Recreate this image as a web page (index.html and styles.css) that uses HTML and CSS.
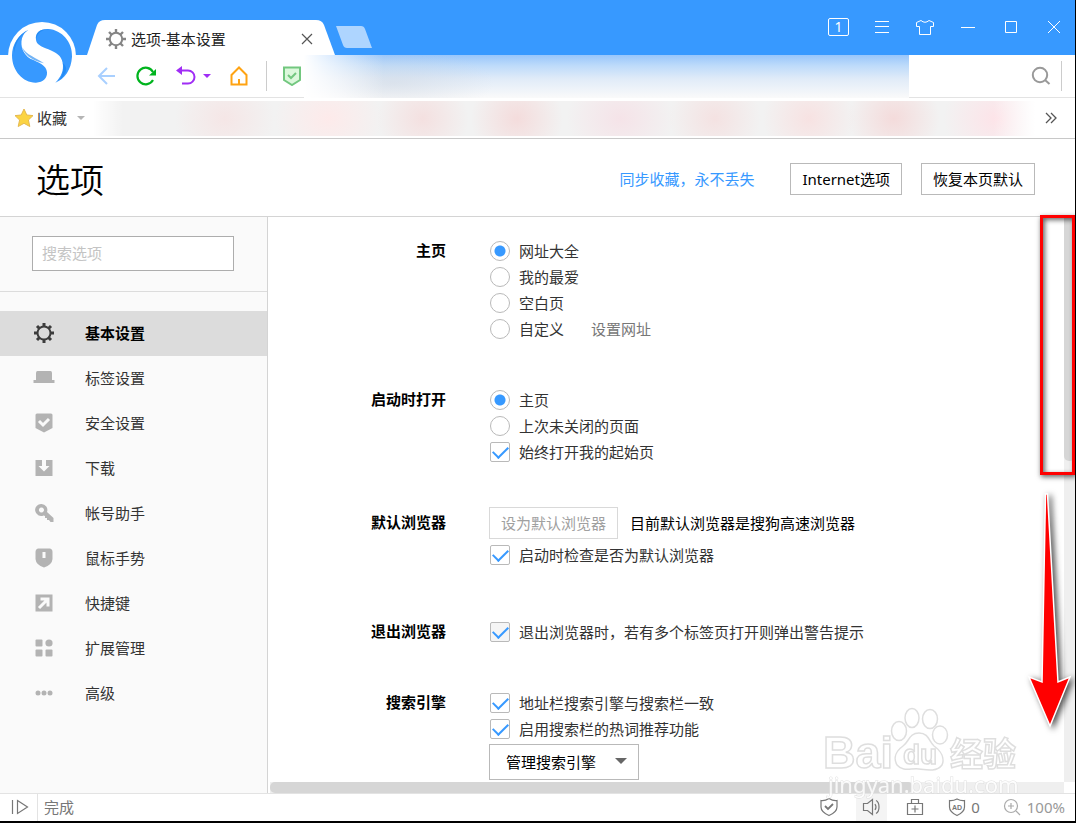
FILE: index.html
```html
<!DOCTYPE html>
<html lang="zh-CN">
<head>
<meta charset="utf-8">
<title>选项-基本设置</title>
<link rel="stylesheet" href="styles.css">
</head>
<body>
<div class="browser">
  <header class="titlebar">
    <svg class="logo" viewBox="0 0 240 261" aria-hidden="true">
      <circle cx="126" cy="168" r="102" fill="#fff"/>
      <path d="M86 89C54 104 36 134 36 166C36 214 70 249 108 248C130 247 142 235 141 217C140 196 116 187 91 176C70 164 60 139 66 115C70 102 77 94 86 89Z" fill="#3799ff"/>
      <path d="M108 119C106 97 121 86 145 87C186 90 218 126 216 170C214 208 194 237 166 248C184 230 192 211 188 189C184 166 168 158 145 148C122 139 109 132 108 119Z" fill="#3799ff"/>
      <path d="M86 89C54 104 40 130 42 158C50 120 62 104 86 89ZM66 140C76 164 112 174 132 190C110 184 76 174 66 140ZM108 119C104 98 121 86 145 87C126 90 112 98 108 119ZM188 189C194 206 188 230 174 244C206 218 202 200 188 189Z" fill="#1682ee" opacity=".6"/>
    </svg>
    <div class="tab">
      <svg class="tab-shape" viewBox="0 0 248 35" preserveAspectRatio="none" aria-hidden="true"><path d="M0 35L10 5Q12 0 18 0H229Q235 0 237 5L248 35Z" fill="#fff"/></svg>
      <svg class="icon20" viewBox="0 0 20 20" fill="none" stroke="#858585" aria-hidden="true"><circle cx="10" cy="10" r="6.2" stroke-width="2"/><path d="M10 0V4M10 16V20M0 10H4M16 10H20M3 3L5.500 5.500M14.500 14.500L17 17M17 3L14.500 5.500M5.500 14.500L3 17" stroke-width="2.400"/></svg>
      <span class="tab-title">选项-基本设置</span>
      <button class="plain tab-close" aria-label="关闭标签"><svg class="icon12" viewBox="0 0 12 12" stroke="#555" stroke-width="1.200"><path d="M1 1L11 11M11 1L1 11"/></svg></button>
    </div>
    <button class="plain new-tab" aria-label="新建标签"><svg viewBox="0 0 37 22"><path d="M0 0H25Q28 0 29 3L36 22H11Q8 22 7 19Z" fill="#aed5ff"/></svg></button>
    <div class="window-buttons">
      <button class="plain" aria-label="窗口数"><span class="count">1</span></button>
      <button class="plain" aria-label="菜单"><svg viewBox="0 0 20 20"><path d="M3 4.500H17M3 9.500H17M3 15.500H17"/></svg></button>
      <button class="plain" aria-label="皮肤"><svg viewBox="0 0 20 20"><path d="M6 3.500Q10 7 14 3.500L18.500 5.500V9.500H15.500V17.500H4.500V9.500H1.500V5.500Z"/></svg></button>
      <button class="plain" aria-label="最小化"><svg viewBox="0 0 20 20"><path d="M3 10.500H17"/></svg></button>
      <button class="plain" aria-label="最大化"><svg viewBox="0 0 20 20"><path d="M4.500 4.500H15.500V15.500H4.500Z"/></svg></button>
      <button class="plain" aria-label="关闭"><svg viewBox="0 0 20 20"><path d="M4 4L16 16M16 4L4 16"/></svg></button>
    </div>
  </header>

  <div class="toolbar">
    <button class="plain" aria-label="后退"><svg class="icon20" viewBox="0 0 20 20" fill="none" stroke="#a9d0ff" stroke-width="2"><path d="M19 10H3M11 2L3 10L11 18"/></svg></button>
    <button class="plain" aria-label="刷新"><svg class="icon20" viewBox="0 0 20 20" fill="none" stroke="#00b41e" stroke-width="2.200"><path d="M17 14A8.300 8.300 0 1 1 17 6"/><path d="M20 3V9.500H13Z" fill="#00b41e" stroke="none"/></svg></button>
    <button class="plain undo" aria-label="恢复"><svg class="icon20" viewBox="0 0 20 20" fill="none" stroke="#a02df5" stroke-width="2"><path d="M3 4.500H12A6.400 6.400 0 0 1 12 17.500H6"/><path d="M0 4.500L6 0V9Z" fill="#a02df5" stroke="none"/></svg><svg class="caret" viewBox="0 0 8 5"><path d="M0 0H8L4 4Z" fill="#a02df5"/></svg></button>
    <button class="plain home" aria-label="主页"><svg class="icon20" viewBox="0 0 20 20" fill="none" stroke="#ffa312" stroke-width="2"><path d="M2.500 18.500V9L10 1.500L17.500 9V18.500ZM10 18V13"/></svg></button>
    <span class="divider"></span>
    <svg class="icon20 shield" viewBox="0 0 20 20" fill="#dcf8dc" stroke="#72c77f" stroke-width="2" role="img" aria-label="安全"><path d="M2 1.500H18V14L10 19L2 14Z"/><path d="M6 9L9 12L14 7" fill="none"/></svg>
    <div class="address"></div>
    <div class="quick-search"><button class="plain" aria-label="搜索"><svg class="icon20" viewBox="0 0 20 20" fill="none" stroke="#999" stroke-width="2"><circle cx="9" cy="9" r="7.200"/><path d="M14 14L18.500 18"/></svg></button><span class="divider"></span></div>
  </div>

  <div class="bookmarks">
    <button class="plain fav"><svg class="icon20" viewBox="0 0 20 20" aria-hidden="true"><path d="M10 1L12.800 7L19 7.600L14.400 12L15.800 18.500L10 15.300L4.200 18.500L5.600 12L1 7.600L7.200 7Z" fill="#fbd443" stroke="#e5b950"/></svg><span>收藏</span><svg class="caret" viewBox="0 0 8 5" aria-hidden="true"><path d="M0 0H8L4 4Z" fill="#b5b5b5"/></svg></button>
    <div class="bookmark-list"></div>
    <button class="plain more" aria-label="更多"><svg class="icon12" viewBox="0 0 12 12" fill="none" stroke="#555" stroke-width="1.300"><path d="M1 1L6 6L1 11M6 1L11 6L6 11"/></svg></button>
  </div>

  <div class="page-head">
    <h1>选项</h1>
    <a class="sync" href="#">同步收藏，永不丢失</a>
    <button class="box">Internet选项</button>
    <button class="box">恢复本页默认</button>
  </div>

  <div class="body">
    <aside class="sidebar">
      <div class="search"><input type="text" placeholder="搜索选项" aria-label="搜索选项"></div>
      <nav class="nav">
        <a class="current" href="#"><svg viewBox="0 0 22 22" fill="none" stroke="#3c3c3c"><circle cx="11" cy="11" r="6.500" stroke-width="2"/><path d="M11 1V5M11 17V21M1 11H5M17 11H21M4 4L6.500 6.500M15.500 15.500L18 18M18 4L15.500 6.500M6.500 15.500L4 18" stroke-width="3"/></svg>基本设置</a>
        <a href="#"><svg viewBox="0 0 22 22"><path d="M4.500 4H17.500Q19 4 19 6V13H21.500V16H.5V13H3V6Q3 4 4.500 4Z"/></svg>标签设置</a>
        <a href="#"><svg viewBox="0 0 22 22"><path d="M4 1.500H18Q19.500 1.500 19.500 3V16L11 20.500L2.500 16V3Q2.500 1.500 4 1.500Z"/><path class="cut" d="M6 9L10 13L16 7"/></svg>安全设置</a>
        <a href="#"><svg viewBox="0 0 22 22"><path d="M2.500 3H9V9H5.500L11 14.500L16.500 9H13V3H19.500V19H2.500Z"/></svg>下载</a>
        <a href="#"><svg viewBox="0 0 22 22"><path fill-rule="evenodd" d="M8.500 2A6 6 0 1 0 10.500 13.500L12 14V16H14V18H16L17.500 20H20.500V16L14 10A6 6 0 0 0 8.500 2ZM8.500 5.500A2.500 2.500 0 1 1 8.400 5.500Z"/></svg>帐号助手</a>
        <a href="#"><svg viewBox="0 0 22 22"><path d="M5 1.500H17Q19.500 2 19.500 5V12Q19 18 11 20.500Q3 18 2.500 12V5Q2.500 2 5 1.500Z"/><path class="cut" d="M11 5V11"/></svg>鼠标手势</a>
        <a href="#"><svg viewBox="0 0 22 22"><path d="M2.500 2.500H19.500V19.500H2.500Z"/><path class="cut" d="M6 16L14 8M7.500 7H15V14.500"/></svg>快捷键</a>
        <a href="#"><svg viewBox="0 0 22 22"><rect x="2.500" y="2.500" width="7" height="7" rx="1"/><circle cx="16" cy="6" r="3.600"/><rect x="2.500" y="12.500" width="7" height="7" rx="1"/><rect x="12.500" y="12.500" width="7" height="7" rx="1"/></svg>扩展管理</a>
        <a href="#"><svg viewBox="0 0 22 22"><circle cx="5" cy="11" r="2.500"/><circle cx="11" cy="11" r="2.500"/><circle cx="17" cy="11" r="2.500"/></svg>高级</a>
      </nav>
    </aside>

    <div class="scroller">
      <main class="settings">
        <section class="group">
          <h2>主页</h2>
          <div class="fields">
            <label><input type="radio" name="home" checked>网址大全</label>
            <label><input type="radio" name="home">我的最爱</label>
            <label><input type="radio" name="home">空白页</label>
            <div class="line"><label><input type="radio" name="home">自定义</label><a class="set-url" href="#">设置网址</a></div>
          </div>
        </section>
        <section class="group">
          <h2>启动时打开</h2>
          <div class="fields">
            <label><input type="radio" name="start" checked>主页</label>
            <label><input type="radio" name="start">上次未关闭的页面</label>
            <label><input type="checkbox" checked>始终打开我的起始页</label>
          </div>
        </section>
        <section class="group default-browser">
          <h2>默认浏览器</h2>
          <div class="fields">
            <div class="line"><button class="box" disabled>设为默认浏览器</button><span class="note">目前默认浏览器是搜狗高速浏览器</span></div>
            <label><input type="checkbox" checked>启动时检查是否为默认浏览器</label>
          </div>
        </section>
        <section class="group">
          <h2>退出浏览器</h2>
          <div class="fields">
            <label><input class="shaded" type="checkbox" checked>退出浏览器时，若有多个标签页打开则弹出警告提示</label>
          </div>
        </section>
        <section class="group">
          <h2>搜索引擎</h2>
          <div class="fields">
            <label><input type="checkbox" checked>地址栏搜索引擎与搜索栏一致</label>
            <label><input type="checkbox" checked>启用搜索栏的热词推荐功能</label>
            <div class="picker"><select aria-label="管理搜索引擎"><option>管理搜索引擎</option></select></div>
          </div>
        </section>
      </main>
      <div class="vbar"><div class="vthumb"></div></div>
      <div class="hbar"><div class="hthumb"></div></div>
    </div>
  </div>

  <footer class="status">
    <button class="plain side-toggle" aria-label="侧边栏"><svg class="icon20" viewBox="0 0 20 20"><path d="M3.500 3V17M8.500 3.500L18.500 10L8.500 16.500Z"/></svg></button>
    <span class="state">完成</span>
    <button class="plain" aria-label="安全"><svg class="icon20" viewBox="0 0 20 20"><path d="M10 1.500Q14 4 18 3.500V10Q18 15 10 18.500Q2 15 2 10V3.500Q6 4 10 1.500Z"/><path d="M6 9L9 12L14 7" stroke-width="1.800"/></svg></button>
    <button class="plain lit" aria-label="声音"><svg class="icon20" viewBox="0 0 20 20"><path d="M1.500 6.500H5.500L10.500 2.500V17.500L5.500 13.500H1.500ZM13 7Q15 10 13 13M14 3.500Q17 5 17 10Q17 15 14 16.500"/></svg></button>
    <button class="plain" aria-label="工具箱"><svg class="icon20" viewBox="0 0 20 20"><path d="M2.500 6.500H17.500V17.500H2.500ZM6.500 6V2.500H13.500V6M10 8.500V15.500M6.500 12H13.500"/></svg></button>
    <button class="plain ads" aria-label="广告拦截 0"><svg class="icon20" viewBox="0 0 20 20"><path d="M10 2Q14 4 17.500 3.500V10Q17.500 15 10 18.500Q2.500 15 2.500 10V3.500Q6 4 10 2Z"/><text x="10" y="13" class="ad-text">AD</text></svg><span>0</span></button>
    <button class="plain zoom"><svg class="icon20" viewBox="0 0 20 20" aria-hidden="true"><circle cx="9" cy="9" r="6.500"/><path d="M14 14L18 18M9 6V12M6 9H12"/></svg><span>100%</span></button>
  </footer>

  <svg class="watermark" viewBox="0 0 210 100" aria-hidden="true">
    <g fill="#fff" stroke="#d9d9d9" stroke-width="1.500">
      <text x="3" y="64" class="wm-bai">Bai</text>
      <ellipse cx="79" cy="27" rx="7.500" ry="9.500"/>
      <ellipse cx="92" cy="14" rx="7" ry="9.500"/>
      <ellipse cx="110" cy="15" rx="7.500" ry="9.500"/>
      <ellipse cx="120" cy="31" rx="7.500" ry="9"/>
      <path d="M99 29C89 29 89 38 83 42C76 47 73 54 77 61C83 68 91 64 99 65C107 66 117 68 122 61C125 54 121 47 114 42C109 38 109 29 99 29Z"/>
      <text x="83" y="60" class="wm-du">du</text>
      <text x="130" y="62" class="wm-cn">经验</text>
      <text x="8" y="89" class="wm-url">jingyan.baidu.com</text>
    </g>
  </svg>
  <div class="mark-box"></div>
  <svg class="mark-arrow" viewBox="0 0 50 250" aria-hidden="true"><path d="M21.500 7H23.500L34 195L46 190L26 239L5 190L18 195Z" fill="#f00" stroke="#fff" stroke-width="1.500"/></svg>
</div>
</body>
</html>
```

FILE: styles.css
```css
* { box-sizing: border-box; }

body {
  margin: 0;
  font: 15px/20px "Noto Sans", "Noto Sans CJK SC", sans-serif;
  color: #333;
  background: #fff;
}

button, input, select { font: inherit; color: inherit; }
a { color: inherit; text-decoration: none; }
svg { display: block; flex: none; }

.browser {
  position: relative;
  display: flex;
  flex-direction: column;
  min-height: 100vh;
  overflow: hidden;
  border-right: 1px solid #000;
  border-bottom: 2px solid #000;
}

.plain {
  display: flex;
  align-items: center;
  justify-content: center;
  padding: 0;
  border: 0;
  background: none;
}

.icon20 { width: 20px; height: 20px; }
.icon12 { width: 12px; height: 12px; }
.caret { width: 8px; height: 5px; }
.divider { width: 1px; height: 30px; background: #ccc; }

/* title bar */
.titlebar {
  display: flex;
  align-items: flex-end;
  height: 55px;
  padding-left: 87px;
  background: #3799ff;
}

.logo { position: absolute; left: 0; top: 0; width: 80px; height: 87px; z-index: 1; }

.tab {
  position: relative;
  display: flex;
  align-items: center;
  width: 248px;
  height: 35px;
  padding: 2px 22px 0 19px;
  color: #222;
}

.tab > * { position: relative; }
.tab .tab-shape { position: absolute; inset: 0; width: 100%; height: 100%; }
.tab-title { flex: 1; margin-left: 5px; }
.new-tab { align-self: center; height: 22px; margin: 19px 0 0 1px; }
.new-tab svg { width: 37px; height: 22px; }

.window-buttons { display: flex; margin-left: auto; }
.window-buttons button { width: 43px; height: 55px; padding-bottom: 2px; }
.window-buttons svg { width: 20px; height: 20px; fill: none; stroke: #fff; }

.count {
  width: 21px;
  height: 18px;
  border: 1px solid #fff;
  border-radius: 2px;
  color: #fff;
  font-size: 14px;
  line-height: 16px;
}

/* toolbar */
.toolbar {
  display: flex;
  align-items: center;
  height: 43px;
  padding-left: 96px;
  border-bottom: 1px solid #e3e3e3;
}

.toolbar > button + button { margin-left: 20px; }
.undo { gap: 7px; }
.toolbar > .home { margin-left: 18px; }
.toolbar > .divider { margin-left: 17px; }
.shield { margin-left: 15px; }

.address {
  flex: 1;
  align-self: stretch;
  margin: 0 0 -1px 2px;
  background:
    linear-gradient(90deg, #fff, rgba(255, 255, 255, 0) 80px),
    radial-gradient(100px 34px at 90px 28px, rgba(205, 212, 222, .45), transparent),
    linear-gradient(#98c6fb, #bedbfa 25%, #e0ebf8 55%, #fafafa);
}

.quick-search {
  display: flex;
  align-items: center;
  justify-content: flex-end;
  width: 166px;
  gap: 10px;
  padding-right: 13px;
}

/* bookmarks */
.bookmarks {
  display: flex;
  align-items: center;
  height: 41px;
  padding: 0 18px 0 14px;
  border-bottom: 1px solid #c8c8c8;
}

.fav { gap: 3px; }
.fav .caret { margin-left: 7px; }

.bookmark-list {
  flex: 1;
  height: 35px;
  margin: 0 10px 0 8px;
  background:
    linear-gradient(90deg, #fff, transparent 30px, transparent 900px, #fff),
    radial-gradient(50px 44px at 14% 50%, #f5e6e6, transparent),
    radial-gradient(54px 44px at 25% 50%, #fdeaea, transparent),
    radial-gradient(46px 44px at 35% 50%, #f4e0e0, transparent),
    radial-gradient(46px 44px at 45% 50%, #f4dcdc, transparent),
    radial-gradient(54px 44px at 56% 50%, #f5e3e8, transparent),
    radial-gradient(46px 44px at 66% 50%, #f4e2e2, transparent),
    radial-gradient(46px 44px at 76% 50%, #f7e2e2, transparent),
    radial-gradient(46px 44px at 85% 50%, #f4dbdb, transparent),
    radial-gradient(54px 44px at 96% 50%, #fde3e8, transparent),
    #f2f2f2;
}

/* page head */
.page-head {
  display: flex;
  align-items: center;
  height: 78px;
  padding: 2px 40px 0 36px;
  border-bottom: 1px solid #d4d4d4;
}

h1 {
  margin: 0 auto 0 0;
  padding-top: 2px;
  color: #000;
  font-size: 34px;
  font-weight: 350;
  line-height: 48px;
}

.sync { margin-right: 36px; color: #3799ff; }

.box {
  height: 32px;
  padding: 0 11px;
  border: 1px solid #b9b9b9;
  background: #fff;
  color: #000;
}

.box + .box { margin-left: 19px; }
.box:disabled { border-color: #d9d9d9; color: #a0a0a0; }

/* body */
.body { display: flex; flex: 1; }

.sidebar {
  flex: none;
  width: 268px;
  border-right: 1px solid #d4d4d4;
  background: #fafafa;
}

.search {
  height: 75px;
  padding: 19px 33px 0 32px;
  border-bottom: 1px solid #dcdcdc;
}

.search input {
  display: block;
  width: 100%;
  height: 35px;
  padding: 0 9px 2px;
  border: 1px solid #adadad;
  border-radius: 0;
  background: #fff;
}

.search input::placeholder { color: #c4c4c4; opacity: 1; }

.nav { padding-top: 19px; }

.nav a {
  display: flex;
  align-items: center;
  gap: 30px;
  height: 45px;
  padding: 0 0 2px 33px;
}

.nav svg { width: 22px; height: 22px; fill: #b3b3b3; }
.nav .cut { fill: none; stroke: #fafafa; stroke-width: 3; }
.nav .current { background: #dcdcdc; color: #000; font-weight: 700; }
.nav .current svg { fill: none; }

.scroller {
  display: grid;
  flex: 1;
  grid-template: 1fr 11px / 1fr 11px;
}

.settings { padding: 21px 0 2px; }

.group {
  display: grid;
  grid-template-columns: 178px 1fr;
  column-gap: 43px;
  margin-bottom: 45px;
}

.group:has(+ .default-browser) { margin-bottom: 42px; }
.default-browser { margin-bottom: 51px; }
.group:last-child { margin-bottom: 0; }

h2 {
  margin: 0;
  color: #000;
  font-size: 15px;
  line-height: 24px;
  text-align: right;
}

.default-browser h2 { line-height: 30px; }

.fields label, .line { display: flex; align-items: center; min-height: 26px; }
.default-browser .line { margin-bottom: 3px; }
.set-url { margin-left: 27px; color: #777; }
.note { margin-left: 12px; color: #000; }

.fields input {
  position: relative;
  width: 20px;
  height: 20px;
  margin: 0 9px 0 1px;
  appearance: none;
  border: 1px solid #b9b9b9;
  border-radius: 2px;
  background: #fff;
}

.fields .shaded { background: #f5f5f5; }
.fields input[type="radio"] { border-radius: 50%; }

.fields input[type="radio"]:checked {
  background: radial-gradient(circle, #3799ff 5px, #fff 6px);
}

.fields input[type="checkbox"]:checked::after {
  content: "";
  position: absolute;
  left: 2px;
  top: 3px;
  width: 13px;
  height: 7px;
  border: solid #3799ff;
  border-width: 0 0 2px 2px;
  transform: rotate(-45deg);
}

.picker { position: relative; width: 150px; margin-top: 2px; }

.picker select {
  display: block;
  width: 100%;
  height: 36px;
  padding: 0 16px;
  appearance: none;
  border: 1px solid #b9b9b9;
  border-radius: 0;
  background: #fff;
  color: #000;
}

.picker::after {
  content: "";
  position: absolute;
  right: 12px;
  top: 14px;
  border: 6px solid transparent;
  border-top-color: #666;
  pointer-events: none;
}

.vbar { background: #efefef; }
.vthumb { height: 244px; border-radius: 0 0 5px 5px; background: #d6d6d6; }
.hbar { margin-left: 2px; background: #efefef; }
.hthumb { width: 81%; height: 100%; border-radius: 5px; background: #d6d6d6; }

/* status bar */
.status {
  display: flex;
  align-items: center;
  height: 28px;
  padding-right: 10px;
  border-top: 1px solid #e3e3e3;
  color: #777;
}

.status svg { fill: none; stroke: #777; stroke-width: 1.2; }
.status > button { width: 31px; height: 27px; margin-right: 12px; padding-bottom: 2px; }
.status > .side-toggle { width: 38px; margin: 0; border-right: 1px solid #e3e3e3; }
.state { margin: 0 auto 0 6px; padding-bottom: 2px; }
.lit { background: #f4f4f4; }
.status > .ads { width: auto; gap: 4px; margin: 0 22px 0 5px; }
.status > .zoom { width: auto; gap: 5px; margin: 0; color: #999; }
.status > .zoom svg { stroke: #aaa; }
.ad-text { fill: #777; stroke: none; font: 700 7px "Liberation Sans", sans-serif; text-anchor: middle; }

/* overlays */
.watermark { position: absolute; right: 45px; bottom: 17px; width: 210px; height: 100px; opacity: .85; pointer-events: none; }
.wm-bai { font: 700 45px "Liberation Sans", sans-serif; }
.wm-du { font: 700 28px "Liberation Sans", sans-serif; }
.wm-cn { font: 700 33px "Noto Sans CJK SC", sans-serif; }
.wm-url { font: 22px "Noto Sans", sans-serif; stroke-width: 1px; paint-order: stroke; }

.mark-box {
  position: absolute;
  right: 0;
  top: 215px;
  width: 35px;
  height: 260px;
  border: 3px solid #f00;
  box-shadow: 1px 2px 5px rgba(0, 0, 0, .6), inset 2px 2px 5px rgba(0, 0, 0, .6);
  pointer-events: none;
}

.mark-arrow {
  position: absolute;
  right: 1px;
  top: 487px;
  width: 50px;
  height: 250px;
  filter: drop-shadow(3px 2px 3px rgba(0, 0, 0, .7));
  pointer-events: none;
}
```
